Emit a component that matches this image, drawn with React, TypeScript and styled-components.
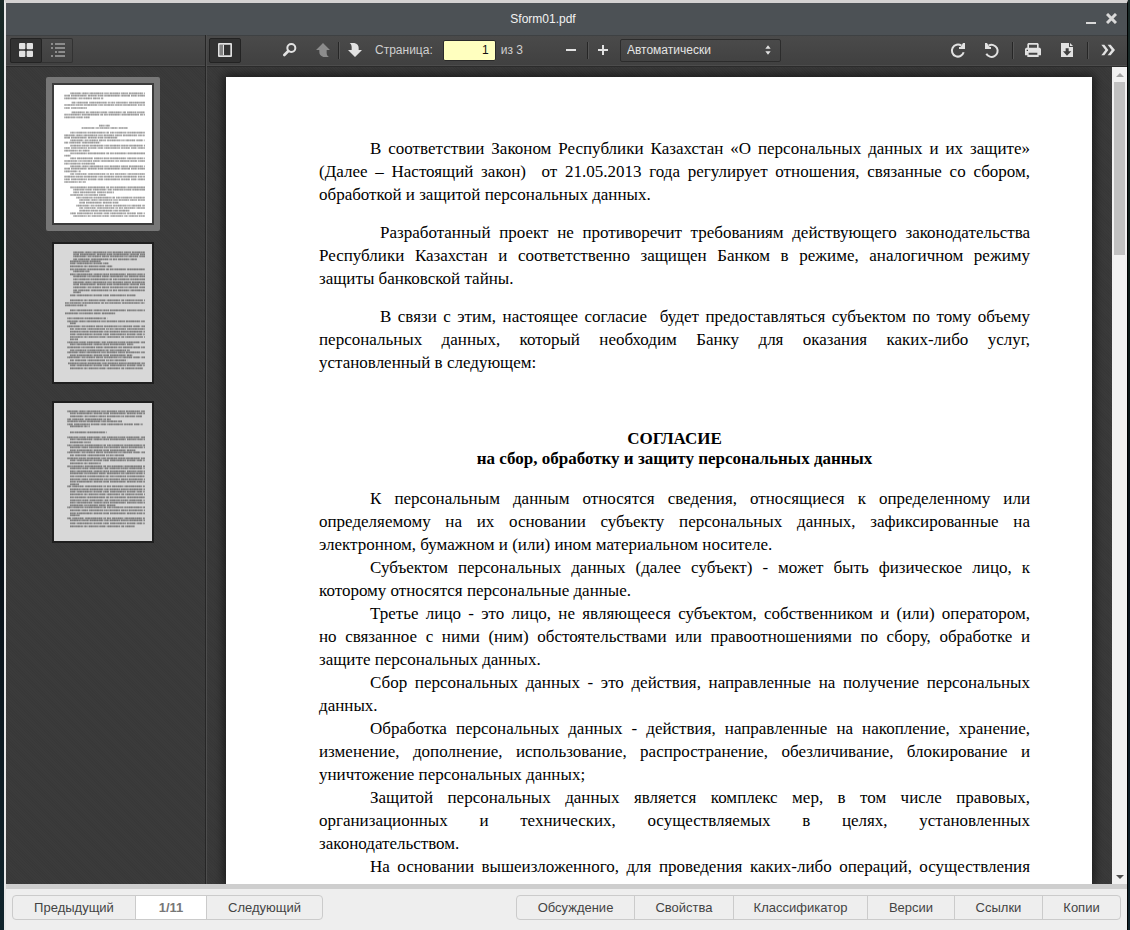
import React from "react";
import styled, { createGlobalStyle, css } from "styled-components";

const GlobalStyle = createGlobalStyle`
  *, *::before, *::after { box-sizing: border-box; }
  html, body, #root { height: 100%; }
  body {
    margin: 0;
    overflow: hidden;
    background: #0b1417;
    font-family: "Liberation Sans", Arial, sans-serif;
  }
  button, input, select { font: inherit; margin: 0; }
`;

const Desktop = styled.div`
  display: flex;
  height: 100%;
  padding: 0 2px 0 4px;
  background: linear-gradient(#1a2a28, #0b1a16 30%, #081018 60%, #10242c);
`;

const Window = styled.div`
  flex: 1;
  min-width: 0;
  display: flex;
  flex-direction: column;
  border-top: 3px solid #d4d2d2;
  border-left: 2px solid #e8e8e8;
  border-right: 1px solid #000;
`;

const TitleBar = styled.header`
  display: flex;
  align-items: center;
  height: 32px;
  padding: 0 5px 1px 0;
  background: #4c5155;
`;

const Title = styled.h1`
  flex: 1;
  margin: 0;
  color: #f2f2f2;
  font-size: 12px;
  font-weight: 400;
  line-height: 16px;
  text-align: center;
`;

const WindowButton = styled.button`
  display: grid;
  place-items: center;
  width: 21px;
  height: 20px;
  padding: 0;
  border: 0;
  background: none;
`;

const Body = styled.div`
  flex: 1;
  min-height: 0;
  display: flex;
  background: #3a3a3a;
`;

const texture = css`
  background-color: #393939;
  background-image: repeating-linear-gradient(45deg, rgba(255, 255, 255, 0.01) 0 1px, rgba(0, 0, 0, 0.01) 1px 2px);
`;

const Sidebar = styled.aside`
  display: flex;
  flex-direction: column;
  width: 200px;
  border-right: 1px solid #262626;
  ${texture}
`;

const Bar = styled.div`
  display: flex;
  align-items: center;
  flex: none;
  height: 32px;
  padding: 0 4px 2px;
  color: #d0d0d0;
  font-size: 12px;
  background: linear-gradient(#4a4a4a, #404040);
  border-top: 1px solid #3e4143;
  border-bottom: 1px solid #2b2b2b;
  box-shadow: inset 0 -1px 0 #4c4c4c;
`;

const ToggleGroup = styled.div`
  display: flex;
  border-radius: 2px;
  box-shadow: 0 0 0 1px #323232 inset;
`;

const ToolButton = styled.button<{ $pressed?: boolean }>`
  display: grid;
  place-items: center;
  flex: none;
  width: ${(p) => (p.$pressed ? 32 : 31)}px;
  height: 25px;
  padding: 0;
  border: 1px solid ${(p) => (p.$pressed ? "#232323" : "transparent")};
  border-radius: 2px;
  background: ${(p) => (p.$pressed ? "#323232" : "none")};
`;

const Separator = styled.span`
  flex: none;
  width: 1px;
  height: 17px;
  background: #262626;
  box-shadow: 1px 0 0 #565656;
`;

const Thumbs = styled.nav`
  flex: 1;
  display: flex;
  flex-direction: column;
  align-items: center;
  gap: 5px;
  padding: 10px 6px 0 0;
  overflow: hidden;
`;

const ThumbLink = styled.a<{ $current?: boolean }>`
  display: block;
  padding: 6px;
  border-radius: 2px;
  background: ${(p) => (p.$current ? "#777" : "none")};
`;

const ThumbPage = styled.svg<{ $current?: boolean }>`
  display: block;
  width: 102px;
  height: 142px;
  border: 2px solid ${(p) => (p.$current ? "#3b3b3b" : "#1f1f1f")};
  background: ${(p) => (p.$current ? "#fff" : "#d8d8d8")};
`;

const Main = styled.main`
  flex: 1;
  min-width: 0;
  display: flex;
  flex-direction: column;
  border-left: 1px solid #4d4d4d;
`;

const MainBar = styled(Bar)`
  padding: 0 4px 2px 2px;
`;

const FindGroup = styled.div`
  display: flex;
  align-items: center;
  margin-left: 33px;
`;

const FindButton = styled(ToolButton)`
  margin-right: 2px;
`;

const PageLabel = styled.label`
  margin-left: 5px;
  line-height: 16px;
`;

const PageInput = styled.input`
  width: 53px;
  height: 21px;
  margin: 0 5px 0 10px;
  padding: 0 6px;
  border: 1px solid #2a2a2a;
  border-radius: 2px;
  background: #ffffbf;
  color: #111;
  text-align: right;
`;

const ZoomGroup = styled.div`
  display: flex;
  align-items: center;
  margin-left: 33px;
`;

const SelectBox = styled.div`
  display: flex;
  align-items: center;
  width: 161px;
  height: 23px;
  margin-left: 1px;
  padding-right: 5px;
  border: 1px solid #2c2c2c;
  border-radius: 2px;
  background: linear-gradient(#4a4a4a, #424242);
`;

const ZoomSelect = styled.select`
  flex: 1;
  height: 21px;
  padding: 0 0 0 6px;
  appearance: none;
  border: 0;
  background: none;
  color: #e4e4e4;
`;

const RightGroup = styled.div`
  display: flex;
  align-items: center;
  gap: 3px;
  margin-left: auto;
`;

const SpacedSeparator = styled(Separator)`
  margin: 0 1px 0 2px;
`;

const Viewer = styled.div`
  flex: 1;
  min-height: 0;
  display: flex;
  ${texture}
`;

const Scroller = styled.div`
  flex: 1;
  min-width: 0;
  padding: 10px 20px 0 19px;
  overflow: hidden;
`;

const Sheet = styled.article`
  min-height: 100%;
  padding: 60px 62px 0 93px;
  background: #fff;
  box-shadow: 0 0 10px 2px rgba(0, 0, 0, 0.6);
  color: #000;
  font-family: "Liberation Serif", "Times New Roman", serif;
  font-size: 17px;
  line-height: 23px;
`;

const Paragraph = styled.p<{ $gap?: boolean }>`
  margin: 0 0 ${(p) => (p.$gap ? "15px" : "0")};
`;

const Line = styled.span<{ $indent?: number; $last?: boolean }>`
  display: block;
  padding-left: ${(p) => p.$indent || 0}px;
  white-space: nowrap;
  text-align: justify;
  text-align-last: ${(p) => (p.$last ? "left" : "justify")};
`;

const Heading = styled.h2`
  margin: 55px 0 18px;
  font-size: 17px;
  font-weight: 700;
  line-height: 20px;
  text-align: center;
`;

const HeadingLine = styled.span`
  display: block;
`;

const ScrollTrack = styled.div`
  display: flex;
  flex-direction: column;
  width: 15px;
  background: #f1f1f1;
`;

const ScrollButton = styled.button`
  display: grid;
  place-items: center;
  width: 15px;
  height: 15px;
  padding: 0;
  border: 0;
  background: none;
`;

const ScrollRange = styled.div`
  flex: 1;
  padding: 0 2px;
`;

const ScrollThumb = styled.div`
  height: 22%;
  background: #c1c1c1;
`;

const Footer = styled.footer`
  display: flex;
  justify-content: space-between;
  flex: none;
  padding: 6px 6px 10px;
  border-top: 5px solid #cecece;
  background: #eee;
  color: #444;
  font-size: 13px;
`;

const ButtonGroup = styled.div`
  display: flex;
  height: 25px;
  border: 1px solid #cbcbcb;
  border-radius: 4px;
  overflow: hidden;
`;

const FooterButton = styled.button<{ $width: number }>`
  width: ${(p) => p.$width}px;
  padding: 0;
  border: 0;
  border-left: 1px solid #cbcbcb;
  background: none;
  color: inherit;
  &:first-child { border-left: 0; }
`;

const Counter = styled.output`
  width: 71px;
  border-left: 1px solid #cbcbcb;
  background: #fff;
  color: #777;
  font-weight: 700;
  line-height: 23px;
  text-align: center;
`;

/* Toolbar icons share a 42-unit grid drawn at 14px. */
type IconName =
  | "grid" | "outline" | "panel" | "find" | "up" | "down" | "minus" | "plus"
  | "cw" | "ccw" | "print" | "save" | "more" | "arrows";

const shapes: Record<IconName, React.ReactNode> = {
  grid: (
    <>
      <rect width="19" height="19" rx="3" />
      <rect x="23" width="19" height="19" rx="3" />
      <rect y="23" width="19" height="19" rx="3" />
      <rect x="23" y="23" width="19" height="19" rx="3" />
    </>
  ),
  outline: (
    <path d="M0 0h6v6H0zM12 0h30v6H12zM0 12h6v6H0zM12 12h30v6H12zM12 24h6v6h-6zM22 24h20v6H22zM0 36h6v6H0zM12 36h30v6H12z" />
  ),
  panel: (
    <>
      <path fillRule="evenodd" d="M2 0h38l2 2v38l-2 2H2l-2-2V2zM5 5v32h32V5z" />
      <path d="M6 6h9v30H6z" opacity=".45" />
      <path d="M15 5h3v32h-3z" />
    </>
  ),
  find: (
    <>
      <circle cx="25" cy="15" r="12" fill="none" stroke="currentColor" strokeWidth="6" />
      <path d="M16 24L4 36" stroke="currentColor" strokeWidth="8" strokeLinecap="round" />
    </>
  ),
  up: <path d="M21 0L42 21H32V29C32 35 34 39 39 42H22C14 39 10 34 10 28V21H0z" />,
  down: <path d="M5 0H19C28 2 32 8 32 14V21H42L21 42L0 21H11V13C11 7 9 3 5 0z" />,
  minus: <path d="M6 18h30v6H6z" />,
  plus: <path d="M6 18h12V6h6v12h12v6H24v12h-6V24H6z" />,
  cw: (
    <>
      <path d="M31 8A18 18 0 1 0 38 28" fill="none" stroke="currentColor" strokeWidth="6" />
      <path d="M36 0h6v18H24v-6h5z" />
    </>
  ),
  ccw: (
    <>
      <path d="M4 32A18 18 0 1 0 11 8" fill="none" stroke="currentColor" strokeWidth="6" />
      <path d="M6 0H0v18h18v-6h-5z" />
    </>
  ),
  print: (
    <path
      fillRule="evenodd"
      d="M7 0h28l3 3v11h4l3 4v19h-7v5H4v-5h-7V18l3-4h4V3zM9 5v9h24V5zM8 29v6h26v-6zM2 20h4v4H2z"
    />
  ),
  save: (
    <>
      <path d="M3 0h24v12h12v30H3z" />
      <path d="M30 0l9 9h-9z" />
      <path d="M17 16h9v9h8L21 38 9 25h8z" fill="#3f3f3f" />
    </>
  ),
  more: (
    <path d="M1 5h9l12 16-12 16H1l12-16zM20 5h9l13 16-13 16h-9l12-16z" />
  ),
  arrows: <path d="M13 17l8-10 8 10zM13 25l8 10 8-10z" />,
};

const Glyph = styled.svg`
  display: block;
  width: 14px;
  height: 14px;
  overflow: visible;
  fill: currentColor;
`;

const Icon = ({ name, dim }: { name: IconName; dim?: boolean }) => (
  <Glyph viewBox="0 0 42 42" color={dim ? "#8c8c8c" : "#e2e2e2"} aria-hidden="true">
    {shapes[name]}
  </Glyph>
);

/* Each row is [y, start, end] in the 294 x 414 thumbnail space. */
type Row = [number, number, number];
const rows = (ys: number[], start: number, end = 273): Row[] => ys.map((y) => [y, start, end]);

const thumbs: Row[][] = [
  [
    [25, 49, 273], [32, 31, 273], [40, 31, 148],
    [53, 53, 273], [60, 31, 273], [69, 31, 100],
    [82, 53, 273], [89, 31, 273], [97, 31, 107],
    [122, 135, 168], [129, 83, 221],
    [143, 49, 273], [151, 31, 273], [158, 31, 190],
    [166, 49, 273], [173, 31, 140],
    [182, 49, 273], [189, 31, 273], [197, 31, 107],
    [205, 49, 273], [212, 31, 50],
    [220, 49, 273], [228, 31, 273], [236, 31, 123],
    [244, 49, 273], [251, 31, 273], [259, 31, 80],
    [267, 49, 273], [275, 31, 273], [283, 31, 273], [291, 31, 95],
    [307, 49, 273], ...rows([314], 58), [322, 58, 180],
    [330, 49, 156], [338, 67, 273], ...rows([345], 76), [353, 76, 195],
    [362, 67, 273], ...rows([369], 76), [377, 76, 228],
    [385, 49, 273], [393, 58, 273],
  ],
  [
    ...rows([25, 31, 37], 58), [46, 58, 249],
    [52, 48, 140], [58, 48, 163], [67, 48, 175], [76, 48, 273], [82, 58, 106],
    [91, 48, 273], ...rows([97, 106, 115, 121, 130, 139], 58), [145, 58, 80], [154, 48, 245],
    [169, 48, 273], [177, 33, 273], [184, 33, 98],
    [199, 48, 273], [208, 33, 185],
    [223, 40, 160], [232, 40, 273], [238, 48, 66],
    [247, 40, 273], ...rows([255, 263, 271, 279], 48), [286, 48, 72],
    [295, 40, 273], [301, 48, 238], [310, 40, 273], [319, 48, 228],
    [325, 40, 273], [334, 48, 235], [340, 40, 273], [349, 48, 220],
    [358, 42, 273], [364, 48, 273], [373, 48, 266],
  ],
  [
    [25, 40, 273], [31, 48, 273], [40, 48, 264], [49, 40, 170], [55, 40, 204],
    [64, 40, 266], [70, 48, 107], [88, 48, 158],
    [103, 40, 273], [109, 48, 273], [118, 48, 110],
    [127, 40, 273], [133, 48, 273], [142, 48, 244],
    [148, 40, 273], [157, 48, 210], [166, 40, 273], [172, 48, 273], [181, 48, 140],
    [190, 40, 273], ...rows([196, 205, 211, 220, 229, 236], 48), [244, 48, 75],
    [250, 40, 273], ...rows([259, 266, 274, 283, 292, 299], 48), [307, 48, 184],
    [313, 40, 273], [322, 48, 273], [331, 48, 273], [337, 48, 77],
    [346, 40, 273], [352, 48, 273], [361, 48, 273], [370, 48, 242],
  ],
];

/* Word and letter rhythms, layered so that the rows read as tiny print. */
const words = ["32 3 20 3 41 4 12 3", "17 3 47 4 26 3", "39 4 9 3 28 3 21 4", "12 3 34 4 52 3 8 3"];
const letters = ["3 2 5 4 2 3", "4 3 2 2 6 3", "2 3 3 2 5 5"];

const Thumbnail = ({ index }: { index: number }) => (
  <ThumbLink href={`#page-${index + 1}`} $current={index === 0} aria-label={`Страница ${index + 1}`}>
    <ThumbPage viewBox="0 0 294 414" $current={index === 0} aria-hidden="true">
      {thumbs[index].map(([y, start, end], i) => (
        <g key={i} stroke={index === 0 ? "#5c5c5c" : "#444"} strokeWidth="5">
          <path d={`M${start} ${y}H${end}`} strokeDasharray={words[i % words.length]} opacity="0.42" />
          <path d={`M${start} ${y}H${end}`} strokeDasharray={letters[i % letters.length]} opacity="0.3" />
        </g>
      ))}
    </ThumbPage>
  </ThumbLink>
);

type Block = { lines: string[]; indent: number; open?: boolean };

const preamble: Block[] = [
  {
    indent: 51,
    lines: [
      "В соответствии Законом Республики Казахстан «О персональных данных и их защите»",
      "(Далее – Настоящий закон)\u00a0 от 21.05.2013 года регулирует отношения, связанные со сбором,",
      "обработкой и защитой персональных данных.",
    ],
  },
  {
    indent: 61,
    lines: [
      "Разработанный проект не противоречит требованиям действующего законодательства",
      "Республики Казахстан и соответственно защищен Банком в режиме, аналогичном режиму",
      "защиты банковской тайны.",
    ],
  },
  {
    indent: 61,
    lines: [
      "В связи с этим, настоящее согласие\u00a0 будет предоставляться субъектом по тому объему",
      "персональных данных, который необходим Банку для оказания каких-либо услуг,",
      "установленный в следующем:",
    ],
  },
];

const terms: Block[] = [
  {
    indent: 51,
    lines: [
      "К персональным данным относятся сведения, относящиеся к определенному или",
      "определяемому на их основании субъекту персональных данных, зафиксированные на",
      "электронном, бумажном и (или) ином материальном носителе.",
    ],
  },
  {
    indent: 51,
    lines: [
      "Субъектом персональных данных (далее субъект) - может быть физическое лицо, к",
      "которому относятся персональные данные.",
    ],
  },
  {
    indent: 51,
    lines: [
      "Третье лицо - это лицо, не являющееся субъектом, собственником и (или) оператором,",
      "но связанное с ними (ним) обстоятельствами или правоотношениями по сбору, обработке и",
      "защите персональных данных.",
    ],
  },
  {
    indent: 51,
    lines: ["Сбор персональных данных - это действия, направленные на получение персональных", "данных."],
  },
  {
    indent: 51,
    lines: [
      "Обработка персональных данных - действия, направленные на накопление, хранение,",
      "изменение, дополнение, использование, распространение, обезличивание, блокирование и",
      "уничтожение персональных данных;",
    ],
  },
  {
    indent: 51,
    lines: [
      "Защитой персональных данных является комплекс мер, в том числе правовых,",
      "организационных и технических, осуществляемых в целях, установленных",
      "законодательством.",
    ],
  },
  {
    indent: 51,
    open: true,
    lines: ["На основании вышеизложенного, для проведения каких-либо операций, осуществления"],
  },
];

const TextBlock = ({ block, gap }: { block: Block; gap?: boolean }) => (
  <Paragraph $gap={gap}>
    {block.lines.map((line, i) => (
      <Line
        key={i}
        $indent={i === 0 ? block.indent : 0}
        $last={i === block.lines.length - 1 && !block.open}
      >
        {line}
      </Line>
    ))}
  </Paragraph>
);

const sections: [string, number][] = [
  ["Обсуждение", 117],
  ["Свойства", 99],
  ["Классификатор", 134],
  ["Версии", 87],
  ["Ссылки", 88],
  ["Копии", 78],
];

export default function App() {
  return (
    <>
      <GlobalStyle />
      <Desktop>
        <Window>
          <TitleBar>
            <Title>Sform01.pdf</Title>
            <WindowButton aria-label="Свернуть">
              <svg width="10" height="12" viewBox="0 0 10 12" aria-hidden="true">
                <path d="M0 9h10v2H0z" fill="#d9d9d9" />
              </svg>
            </WindowButton>
            <WindowButton aria-label="Закрыть">
              <svg width="11" height="11" viewBox="0 0 11 11" aria-hidden="true">
                <path d="M1 1l9 9M10 1l-9 9" stroke="#d9d9d9" strokeWidth="3" />
              </svg>
            </WindowButton>
          </TitleBar>

          <Body>
            <Sidebar>
              <Bar>
                <ToggleGroup>
                  <ToolButton $pressed aria-label="Миниатюры"><Icon name="grid" /></ToolButton>
                  <ToolButton aria-label="Содержание"><Icon name="outline" dim /></ToolButton>
                </ToggleGroup>
              </Bar>
              <Thumbs>
                {thumbs.map((_, i) => <Thumbnail key={i} index={i} />)}
              </Thumbs>
            </Sidebar>

            <Main>
              <MainBar>
                <ToolButton $pressed aria-label="Боковая панель"><Icon name="panel" /></ToolButton>
                <FindGroup>
                  <FindButton aria-label="Найти"><Icon name="find" /></FindButton>
                  <ToolButton aria-label="Предыдущая страница" disabled><Icon name="up" dim /></ToolButton>
                  <Separator />
                  <ToolButton aria-label="Следующая страница"><Icon name="down" /></ToolButton>
                  <PageLabel htmlFor="page">Страница:</PageLabel>
                  <PageInput id="page" defaultValue="1" />
                  <span>из 3</span>
                </FindGroup>
                <ZoomGroup>
                  <ToolButton aria-label="Уменьшить"><Icon name="minus" /></ToolButton>
                  <Separator />
                  <ToolButton aria-label="Увеличить"><Icon name="plus" /></ToolButton>
                  <SelectBox>
                    <ZoomSelect aria-label="Масштаб" defaultValue="auto">
                      <option value="auto">Автоматически</option>
                    </ZoomSelect>
                    <Icon name="arrows" />
                  </SelectBox>
                </ZoomGroup>
                <RightGroup>
                  <ToolButton aria-label="Повернуть по часовой"><Icon name="cw" /></ToolButton>
                  <ToolButton aria-label="Повернуть против часовой"><Icon name="ccw" /></ToolButton>
                  <SpacedSeparator />
                  <ToolButton aria-label="Печать"><Icon name="print" /></ToolButton>
                  <ToolButton aria-label="Загрузить"><Icon name="save" /></ToolButton>
                  <SpacedSeparator />
                  <ToolButton aria-label="Инструменты"><Icon name="more" /></ToolButton>
                </RightGroup>
              </MainBar>

              <Viewer>
                <Scroller>
                  <Sheet id="page-1">
                    {preamble.map((block, i) => <TextBlock key={i} block={block} gap />)}
                    <Heading>
                      <HeadingLine>СОГЛАСИЕ</HeadingLine>
                      <HeadingLine>на сбор, обработку и защиту персональных данных</HeadingLine>
                    </Heading>
                    {terms.map((block, i) => <TextBlock key={i} block={block} />)}
                  </Sheet>
                </Scroller>
                <ScrollTrack>
                  <ScrollButton aria-label="Вверх">
                    <svg width="8" height="4" viewBox="0 0 8 4" aria-hidden="true"><path d="M0 4l4-4 4 4z" fill="#a3a3a3" /></svg>
                  </ScrollButton>
                  <ScrollRange><ScrollThumb /></ScrollRange>
                  <ScrollButton aria-label="Вниз">
                    <svg width="8" height="4" viewBox="0 0 8 4" aria-hidden="true"><path d="M0 0l4 4 4-4z" fill="#505050" /></svg>
                  </ScrollButton>
                </ScrollTrack>
              </Viewer>
            </Main>
          </Body>

          <Footer>
            <ButtonGroup>
              <FooterButton $width={122}>Предыдущий</FooterButton>
              <Counter>1/11</Counter>
              <FooterButton $width={116}>Следующий</FooterButton>
            </ButtonGroup>
            <ButtonGroup>
              {sections.map(([label, width]) => (
                <FooterButton key={label} $width={width}>{label}</FooterButton>
              ))}
            </ButtonGroup>
          </Footer>
        </Window>
      </Desktop>
    </>
  );
}
